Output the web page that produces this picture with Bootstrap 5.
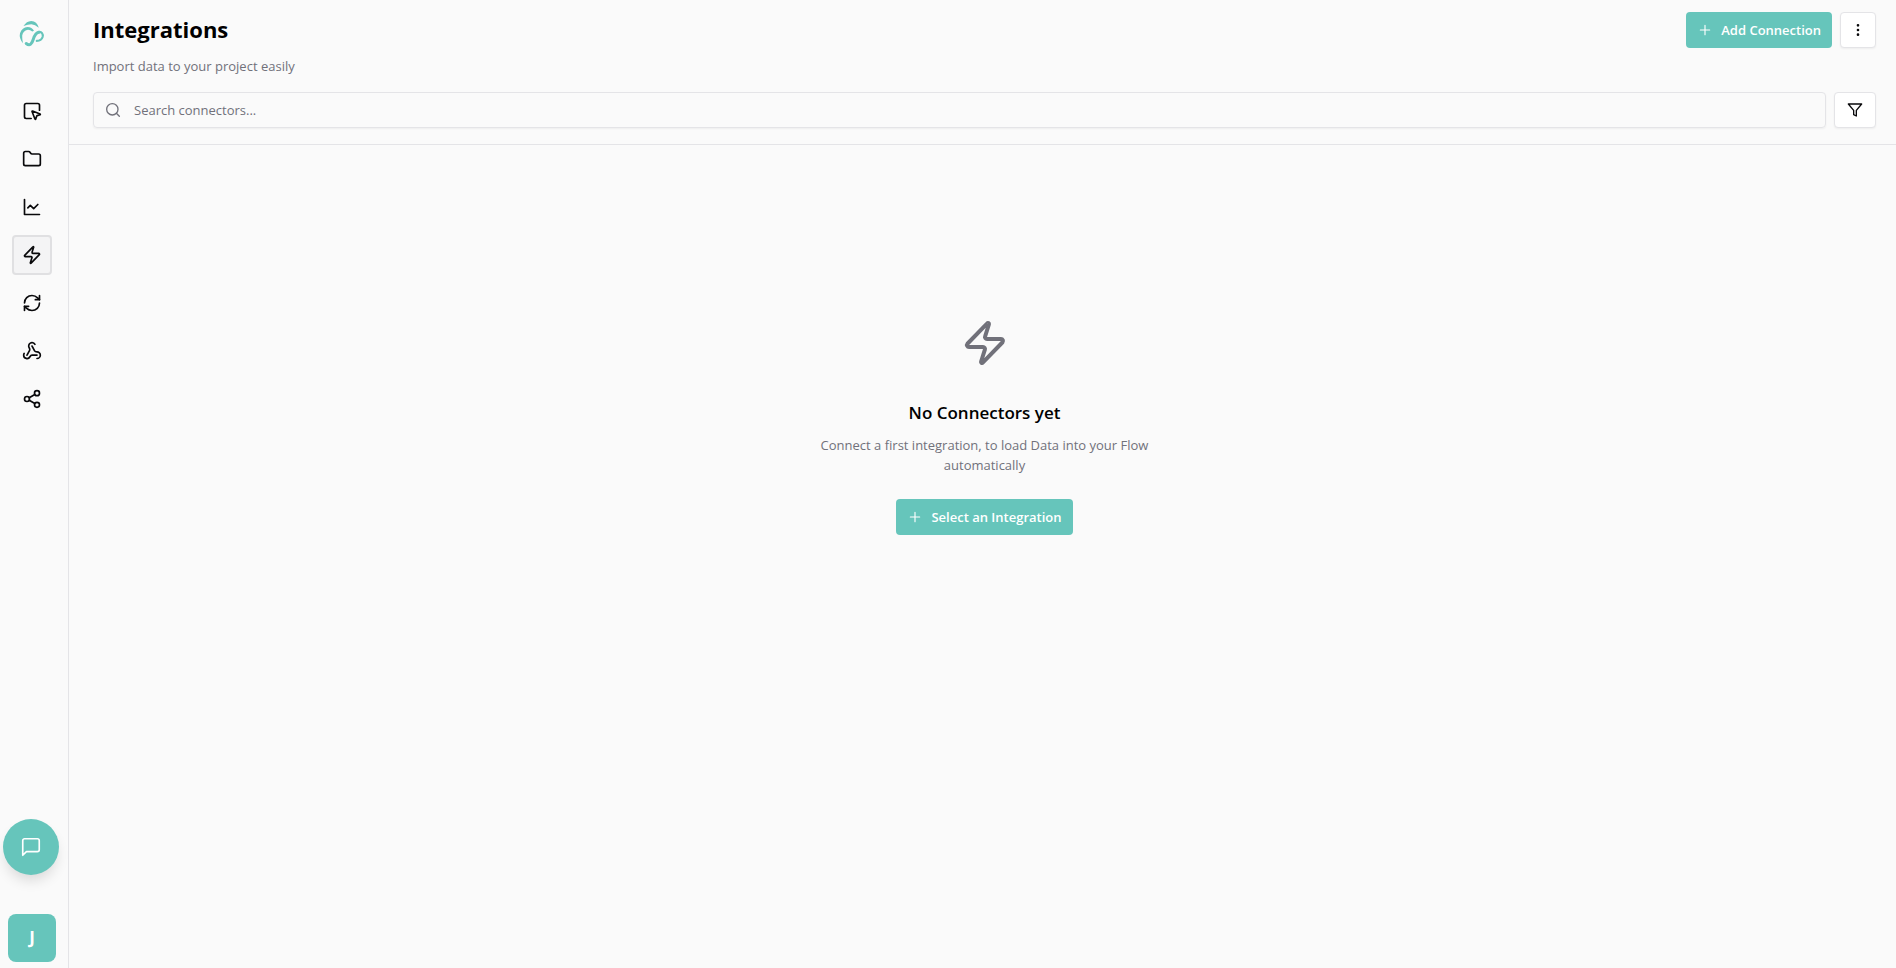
<!DOCTYPE html>
<html lang="en">
<head>
<meta charset="utf-8">
<meta name="viewport" content="width=device-width, initial-scale=1">
<title>Integrations</title>
<link href="https://cdn.jsdelivr.net/npm/bootstrap@5.3.0/dist/css/bootstrap.min.css" rel="stylesheet">
<style>
  :root { --teal: #66c5bb; --line: #e4e4e7; --muted: #71717a; }
  body { font-family: "Segoe UI", "Open Sans", "Noto Sans", sans-serif; font-size: 13px; line-height: 20px; color: #09090b; background: #fafafa; }
  svg { display: block; fill: none; stroke: currentColor; stroke-width: 2; stroke-linecap: round; stroke-linejoin: round; flex: none; }
  .sidebar { width: 69px; padding: 20px 4px 6px 0; border-right: 1px solid var(--line); }
  .brand-link { margin-bottom: 43px; color: var(--teal); }
  .side-link { width: 40px; height: 40px; color: #09090b; border: 1px solid transparent; border-radius: 4px; }
  .side-link:hover { background: #f4f4f5; }
  .side-link.active { background: #f4f4f5; border: 2px solid #e0e0e2; }
  .chat-btn { width: 56px; height: 56px; margin: auto 2px 39px 0; background: var(--teal); box-shadow: 0 8px 14px -3px rgba(0,0,0,.14); }
  .avatar-btn { width: 48px; height: 48px; border-radius: 8px; background: var(--teal); font-size: 17px; }
  .page-head { padding: 12px 20px 16px 24px; border-bottom: 1px solid var(--line); }
  .page-title { font-size: 22px; line-height: 34px; color: #000; }
  .muted-text { color: var(--muted); }
  .btn-teal, .btn-plain { height: 36px; border-radius: 4px; font-size: 13px; line-height: 20px; }
  .btn-teal, .btn-teal:hover { padding: 0 11px; background: var(--teal); color: #fff; }
  .btn-plain, .btn-plain:hover { background: #fff; border: 1px solid var(--line); color: #09090b; box-shadow: 0 1px 2px rgba(0,0,0,.05); }
  .w-more { width: 36px; }
  .w-filter { width: 42px; }
  .search-box { height: 36px; padding: 0 11px; gap: 13px; border: 1px solid var(--line); border-radius: 4px; box-shadow: 0 1px 2px rgba(0,0,0,.05); }
  .search-box .form-control { font-size: 13px; line-height: 20px; }
  .search-box .form-control::placeholder { color: var(--muted); opacity: 1; }
  .empty { padding: 158px 20px 24px 24px; }
  .empty-box { width: 340px; }
  .empty-icon { padding: 16px; margin-bottom: 16px; }
  .empty-title { font-size: 17px; line-height: 28px; margin-bottom: 8px; color: #000; }
</style>
</head>
<body>
<div class="d-flex min-vh-100">
  <nav class="sidebar d-flex flex-column align-items-center flex-shrink-0" aria-label="Main">
    <a href="#" class="brand-link" aria-label="Home">
      <svg width="28" height="28" viewBox="0 0 28 28">
        <g fill="currentColor" stroke="none">
          <path d="M5.500 6Q8.500 1.200 13.200 1Q19 1.300 20.800 7.800Q17 4.600 13.400 4.300Q10 4.300 5.500 6Z"/>
          <path d="M5 23.200Q0.800 18.200 2 13.200Q4.200 7.200 9.500 7Q14 7.200 16 10.800L14.300 11.600Q11.800 9.400 8.900 10Q5 11.200 4.200 15.500Q4 19.200 5 23.200Z"/>
        </g>
        <path stroke-width="3" d="M8.200 23.500C12 26.500 14 23.500 15.200 19.500C16.500 15.500 18 12.600 20.800 12.300"/>
        <path stroke-width="2.200" d="M20.500 12.100C23.500 11.200 25.500 14 24.600 17C23.800 19.400 21.500 20.900 18.800 20.900"/>
      </svg>
    </a>
    <div class="d-flex flex-column gap-2">
      <a href="#" class="side-link d-flex align-items-center justify-content-center" aria-label="Workspace"><svg width="20" height="20" viewBox="0 0 24 24"><path d="M12.034 12.681a.498.498 0 0 1 .647-.647l9 3.500a.5.5 0 0 1-.033.943l-3.444 1.068a1 1 0 0 0-.66.66l-1.067 3.443a.5.5 0 0 1-.943.033z"/><path d="M21 11V5a2 2 0 0 0-2-2H5a2 2 0 0 0-2 2v14a2 2 0 0 0 2 2h6"/></svg></a>
      <a href="#" class="side-link d-flex align-items-center justify-content-center" aria-label="Files"><svg width="20" height="20" viewBox="0 0 24 24"><path d="M20 20a2 2 0 0 0 2-2V8a2 2 0 0 0-2-2h-7.900a2 2 0 0 1-1.690-.9L9.600 3.900A2 2 0 0 0 7.930 3H4a2 2 0 0 0-2 2v13a2 2 0 0 0 2 2Z"/></svg></a>
      <a href="#" class="side-link d-flex align-items-center justify-content-center" aria-label="Analytics"><svg width="20" height="20" viewBox="0 0 24 24"><path d="M3 3v18h18"/><path d="m19 9-5 5-4-4-3 3"/></svg></a>
      <a href="#" class="side-link active d-flex align-items-center justify-content-center" aria-label="Integrations" aria-current="page"><svg width="20" height="20" viewBox="0 0 24 24"><path d="M4 14a1 1 0 0 1-.78-1.630l9.900-10.200a.5.5 0 0 1 .86.46l-1.920 6.020A1 1 0 0 0 13 10h7a1 1 0 0 1 .78 1.630l-9.900 10.200a.5.5 0 0 1-.86-.46l1.920-6.020A1 1 0 0 0 11 14z"/></svg></a>
      <a href="#" class="side-link d-flex align-items-center justify-content-center" aria-label="Sync"><svg width="20" height="20" viewBox="0 0 24 24"><path d="M3 12a9 9 0 0 1 9-9 9.750 9.750 0 0 1 6.740 2.740L21 8"/><path d="M21 3v5h-5"/><path d="M21 12a9 9 0 0 1-9 9 9.750 9.750 0 0 1-6.740-2.740L3 16"/><path d="M8 16H3v5"/></svg></a>
      <a href="#" class="side-link d-flex align-items-center justify-content-center" aria-label="Webhooks"><svg width="20" height="20" viewBox="0 0 24 24"><path d="M18 16.980h-5.990c-1.100 0-1.950.94-2.480 1.900A4 4 0 0 1 2 17c.01-.7.2-1.400.57-2"/><path d="m6 17 3.130-5.780c.53-.97.1-2.180-.5-3.100a4 4 0 1 1 6.890-4.060"/><path d="m12 6 3.130 5.730C15.660 12.700 16.900 13 18 13a4 4 0 0 1 0 8"/></svg></a>
      <a href="#" class="side-link d-flex align-items-center justify-content-center" aria-label="Share"><svg width="20" height="20" viewBox="0 0 24 24"><circle cx="18" cy="5" r="3"/><circle cx="6" cy="12" r="3"/><circle cx="18" cy="19" r="3"/><path d="m8.590 13.510 6.830 3.980M15.410 6.510l-6.820 3.980"/></svg></a>
    </div>
    <button type="button" class="chat-btn btn rounded-circle border-0 p-0 text-white d-flex align-items-center justify-content-center" aria-label="Open chat"><svg width="22" height="22" viewBox="0 0 24 24"><path stroke-width="1.800" d="M21 15a2 2 0 0 1-2 2H7l-4 4V5a2 2 0 0 1 2-2h14a2 2 0 0 1 2 2z"/></svg></button>
    <button type="button" class="avatar-btn btn border-0 p-0 text-white fw-bold">J</button>
  </nav>

  <div class="flex-grow-1 d-flex flex-column">
    <header class="page-head">
      <div class="d-flex align-items-start gap-2">
        <h1 class="page-title fw-bold mb-0 me-auto">Integrations</h1>
        <button type="button" class="btn btn-teal border-0 fw-semibold d-flex align-items-center gap-2"><svg width="16" height="16" viewBox="0 0 24 24"><path stroke-width="1.700" d="M5 12h14M12 5v14"/></svg>Add Connection</button>
        <button type="button" class="btn btn-plain w-more p-0 d-flex align-items-center justify-content-center" aria-label="More options"><svg width="16" height="16" viewBox="0 0 24 24"><circle cx="12" cy="12" r="1"/><circle cx="12" cy="5" r="1"/><circle cx="12" cy="19" r="1"/></svg></button>
      </div>
      <p class="muted-text mt-2 mb-3">Import data to your project easily</p>
      <div class="d-flex gap-2">
        <label class="search-box d-flex align-items-center flex-grow-1 muted-text">
          <svg width="16" height="16" viewBox="0 0 24 24" aria-hidden="true"><circle cx="11" cy="11" r="8.500"/><path d="m21.500 21.500-4.500-4.500"/></svg>
          <input type="search" class="form-control border-0 bg-transparent shadow-none p-0" placeholder="Search connectors..." aria-label="Search connectors">
        </label>
        <button type="button" class="btn btn-plain w-filter p-0 d-flex align-items-center justify-content-center" aria-label="Filter"><svg width="16" height="16" viewBox="0 0 24 24"><path d="M22 3H2l8 9.460V19l4 2v-8.540L22 3z"/></svg></button>
      </div>
    </header>

    <main class="empty d-flex justify-content-center">
      <div class="empty-box d-flex flex-column align-items-center text-center">
        <div class="empty-icon muted-text"><svg width="48" height="48" viewBox="0 0 24 24"><path d="M4 14a1 1 0 0 1-.78-1.630l9.900-10.200a.5.5 0 0 1 .86.46l-1.920 6.020A1 1 0 0 0 13 10h7a1 1 0 0 1 .78 1.630l-9.900 10.200a.5.5 0 0 1-.86-.46l1.920-6.020A1 1 0 0 0 11 14z"/></svg></div>
        <h2 class="empty-title fw-semibold">No Connectors yet</h2>
        <p class="muted-text mb-4">Connect a first integration, to load Data into your Flow automatically</p>
        <button type="button" class="btn btn-teal border-0 fw-semibold d-flex align-items-center gap-2"><svg width="16" height="16" viewBox="0 0 24 24"><path stroke-width="1.700" d="M5 12h14M12 5v14"/></svg>Select an Integration</button>
      </div>
    </main>
  </div>
</div>
<script src="https://cdn.jsdelivr.net/npm/bootstrap@5.3.0/dist/js/bootstrap.bundle.min.js"></script>
</body>
</html>
